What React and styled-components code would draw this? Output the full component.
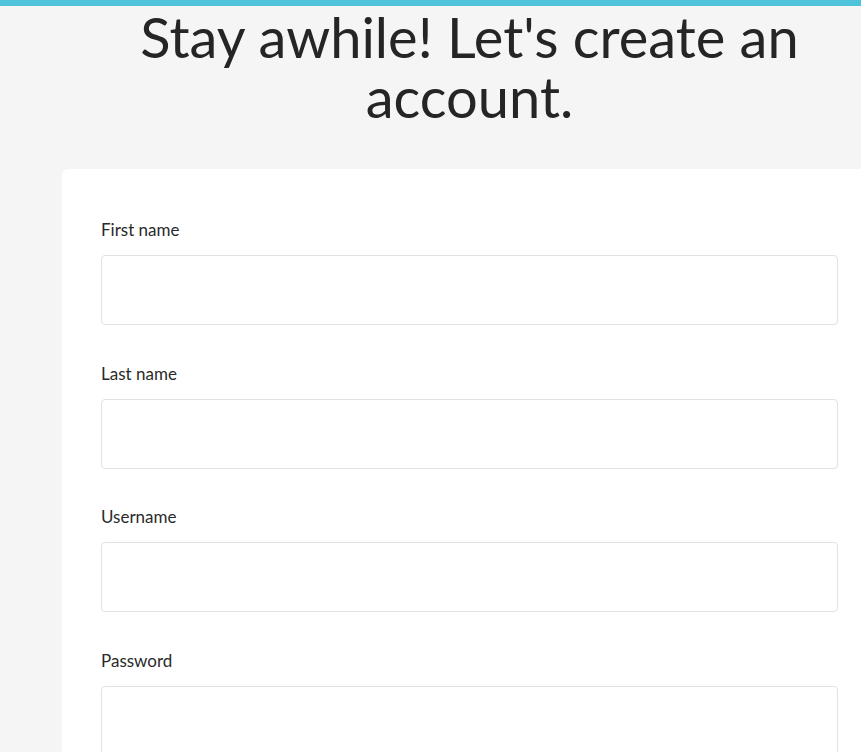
import React from "react";
import styled, { createGlobalStyle } from "styled-components";

const Global = createGlobalStyle`
  html, body { margin: 0; padding: 0; }
  body {
    background: #f5f5f5;
    font-family: Lato, "Noto Sans", sans-serif;
    color: #252525;
    overflow: hidden;
  }
`;

const TopBar = styled.div`
  height: 6px;
  background: #4fc3d9;
`;

const Container = styled.main`
  width: 815px;
  margin-left: 62px;
`;

const Title = styled.h1`
  margin: 1px 0 0;
  font-weight: 400;
  font-size: 56px;
  line-height: 60px;
  text-align: center;
  color: #252525;
`;

const Card = styled.form`
  margin-top: 42px;
  background: #fff;
  border-radius: 6px;
  padding: 49px 39px 40px;
  display: flex;
  flex-direction: column;
  gap: 36.5px;
`;

const Field = styled.div`
  display: flex;
  flex-direction: column;
  gap: 13px;
`;

const Label = styled.label`
  font-size: 17px;
  line-height: 24px;
  color: #2a2a2a;
`;

const Input = styled.input`
  box-sizing: border-box;
  height: 70px;
  width: 100%;
  border: 1px solid #e2e2e2;
  border-radius: 4px;
  background: #fff;
  font-size: 16px;
  padding: 0 16px;
  outline: none;
`;

const fields = [
  { id: "first", label: "First name", type: "text" },
  { id: "last", label: "Last name", type: "text" },
  { id: "user", label: "Username", type: "text" },
  { id: "pass", label: "Password", type: "password" },
];

export default function App() {
  return (
    <>
      <Global />
      <TopBar />
      <Container>
        <Title>
          Stay awhile! Let's create an
          <br />
          account.
        </Title>
        <Card>
          {fields.map((f) => (
            <Field key={f.id}>
              <Label htmlFor={f.id}>{f.label}</Label>
              <Input id={f.id} type={f.type} />
            </Field>
          ))}
        </Card>
      </Container>
    </>
  );
}
